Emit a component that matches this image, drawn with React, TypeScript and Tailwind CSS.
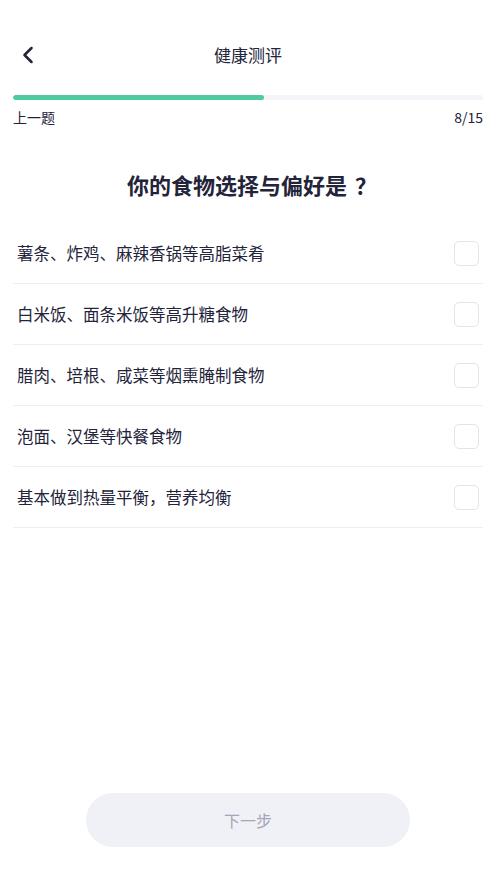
import { ChevronLeft } from "lucide-react";

const OPTIONS = [
  "薯条、炸鸡、麻辣香锅等高脂菜肴",
  "白米饭、面条米饭等高升糖食物",
  "腊肉、培根、咸菜等烟熏腌制食物",
  "泡面、汉堡等快餐食物",
  "基本做到热量平衡，营养均衡",
];

export default function App() {
  const current = 8;
  const total = 15;
  return (
    <div
      className="flex h-[881px] w-[496px] flex-col bg-white text-[#23243a]"
      style={{ fontFamily: '"Noto Sans CJK SC", sans-serif' }}
    >
      {/* Header */}
      <div className="relative flex h-[52px] items-center justify-center mt-[29px]">
        <ChevronLeft className="absolute left-[14px] h-[28px] w-[28px]" strokeWidth={2.2} />
        <span className="text-[17px]">健康测评</span>
      </div>

      {/* Progress */}
      <div className="px-[13px] mt-[14px]">
        <div className="h-[5px] w-full overflow-hidden rounded-full bg-[#f4f5f9]">
          <div className="h-full rounded-full bg-[#4fcaa2]" style={{ width: "53.4%" }} />
        </div>
        <div className="mt-[6px] flex justify-between text-[14px] leading-[22px]">
          <span>上一题</span>
          <span>
            {current}/{total}
          </span>
        </div>
      </div>

      <h1 className="mt-[41px] flex justify-center text-[22px] font-bold leading-[30px]">
        <span>你的食物选择与偏好是</span>
        <span className="inline-block w-[22px] pl-[8px]">？</span>
      </h1>

      <div className="mt-[24px] px-[13px]">
        {OPTIONS.map((o) => (
          <div key={o} className="flex h-[61px] items-center justify-between border-b border-[#eeeff3] pl-[4px] pr-[4px]">
            <span className="text-[16.5px]">{o}</span>
            <span className="h-[25px] w-[25px] rounded-[5px] border border-[#e3e4ea]" />
          </div>
        ))}
      </div>

      <div className="flex-1" />

      <div className="mb-[34px] flex justify-center">
        <button className="h-[54px] w-[324px] rounded-full bg-[#f0f1f6] text-[16px] text-[#a3a5b8]">下一步</button>
      </div>
    </div>
  );
}
